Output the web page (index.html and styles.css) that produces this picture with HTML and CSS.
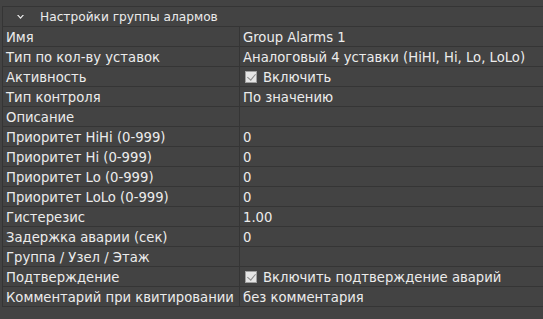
FILE: index.html
```html
<!DOCTYPE html>
<html lang="ru">
  <head>
    <meta charset="UTF-8" />
    <title>Настройки группы алармов</title>
    <link rel="stylesheet" href="styles.css">
  </head>
  <body>
    <div class="panel">
      <div class="header">
        <svg class="chev" width="7" height="4" viewBox="0 0 7 4"><path d="M0 0 L3.5 4 L7 0 L5.5 0 L3.5 2.2 L1.5 0 Z" fill="#f0f0f0"/></svg>
        <span>Настройки группы алармов</span>
      </div>
      <div class="grid">
        <div class="row"><div class="key">Имя</div><div class="val">Group Alarms 1</div></div>
        <div class="row"><div class="key">Тип по кол-ву уставок</div><div class="val">Аналоговый 4 уставки (HiHI, Hi, Lo, LoLo)</div></div>
        <div class="row"><div class="key">Активность</div><div class="val"><span class="check"></span>Включить</div></div>
        <div class="row"><div class="key">Тип контроля</div><div class="val">По значению</div></div>
        <div class="row"><div class="key">Описание</div><div class="val"></div></div>
        <div class="row"><div class="key">Приоритет HiHi (0-999)</div><div class="val">0</div></div>
        <div class="row"><div class="key">Приоритет Hi (0-999)</div><div class="val">0</div></div>
        <div class="row"><div class="key">Приоритет Lo (0-999)</div><div class="val">0</div></div>
        <div class="row"><div class="key">Приоритет LoLo (0-999)</div><div class="val">0</div></div>
        <div class="row"><div class="key">Гистерезис</div><div class="val">1.00</div></div>
        <div class="row"><div class="key">Задержка аварии (сек)</div><div class="val">0</div></div>
        <div class="row"><div class="key">Группа / Узел / Этаж</div><div class="val"></div></div>
        <div class="row"><div class="key">Подтверждение</div><div class="val"><span class="check"></span>Включить подтверждение аварий</div></div>
        <div class="row"><div class="key">Комментарий при квитировании</div><div class="val">без комментария</div></div>
      </div>
    </div>
  </body>
</html>
```

FILE: styles.css
```css
* {
  margin: 0;
  padding: 0;
  box-sizing: border-box;
}
html,
body {
  width: 100%;
  height: 100%;
  background: #434343;
  color: #ececec;
  font-family: "DejaVu Sans", sans-serif;
  font-size: 13.2px;
  overflow: hidden;
}
.panel {
  margin-top: 6px;
  border-top: 1px solid #353535;
  margin-left: 2px;
  border-left: 1px solid #353535;
}
.header {
  height: 20px;
  display: flex;
  align-items: center;
  padding-left: 14px;
  font-size: 12.2px;
  border-bottom: 1px solid #353535;
}
.header .chev {
  margin-right: 16px;
  margin-top: 1px;
}
.row {
  display: grid;
  grid-template-columns: 237px 1fr;
  height: 20px;
  border-bottom: 1px solid #353535;
}
.key,
.val {
  display: flex;
  align-items: center;
  white-space: nowrap;
  padding-top: 1px;
}
.key {
  padding-left: 3px;
  border-right: 1px solid #353535;
}
.val {
  padding-left: 3px;
}
.check {
  width: 12px;
  height: 12px;
  margin-left: 2px;
  margin-right: 6px;
  background: #e6e6e6;
  border: 1px solid #a0a0a0;
  position: relative;
}
.check::after {
  content: "";
  position: absolute;
  left: 3px;
  top: 0px;
  width: 4px;
  height: 7px;
  border: solid #8a8a8a;
  border-width: 0 1px 1px 0;
  transform: rotate(40deg);
}
```
